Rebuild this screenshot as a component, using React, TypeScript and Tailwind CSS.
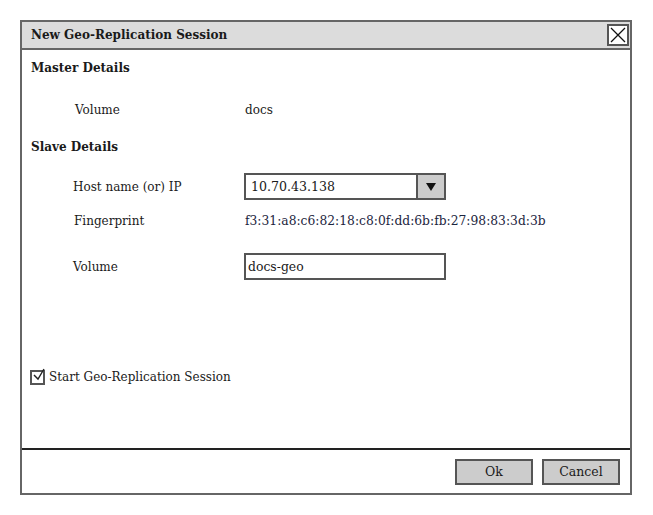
import React from 'react';

const serif = "font-['DejaVu_Serif',serif]";

export default function App() {
  return (
    <div className={`w-[653px] h-[515px] bg-white pt-5 pl-5 ${serif} text-[12px] leading-[18px] text-[#1a1a1a]`}>
      <div className="w-[612px] h-[475px] border-2 border-[#666] flex flex-col">
        {/* Title bar */}
        <div className="h-[28px] bg-[#dcdcdc] border-b-2 border-[#666] flex items-center justify-between pl-[9px] pr-[1px]">
          <span className="font-bold">New Geo-Replication Session</span>
          <div className="w-[22px] h-[22px] bg-white border-2 border-[#555] flex items-center justify-center">
            <svg width="16" height="16" viewBox="0 0 16 16">
              <path d="M1 1 L15 15 M15 1 L1 15" stroke="#111" strokeWidth="1.3" />
            </svg>
          </div>
        </div>

        {/* Body */}
        <div className="flex-1 flex flex-col px-[9px]">
          <div className="font-bold mt-[9px] h-[18px]">Master Details</div>
          <div className="flex items-center mt-[24px] h-[18px]">
            <span className="w-[214px] pl-[44px]">Volume</span>
            <span>docs</span>
          </div>

          <div className="font-bold mt-[19px] h-[18px]">Slave Details</div>
          <div className="flex items-center mt-[17px]">
            <span className="w-[213px] pl-[42px]">Host name (or) IP</span>
            <div className="w-[202px] h-[27px] border-2 border-[#555] flex">
              <span className="flex-1 pl-[5px] flex items-center text-[12.6px]">10.70.43.138</span>
              <div className="w-[28px] bg-[#cccccc] border-l-2 border-[#555] flex items-center justify-center">
                <svg width="10" height="8" viewBox="0 0 10 8">
                  <path d="M0 0 L10 0 L5 8 Z" fill="#111" />
                </svg>
              </div>
            </div>
          </div>
          <div className="flex items-center mt-[12px] h-[18px]">
            <span className="w-[214px] pl-[43px]">Fingerprint</span>
            <span className="text-[12.3px] text-[#1c2540]">f3:31:a8:c6:82:18:c8:0f:dd:6b:fb:27:98:83:3d:3b</span>
          </div>
          <div className="flex items-center mt-[23px]">
            <span className="w-[213px] pl-[42px]">Volume</span>
            <div className="w-[202px] h-[27px] border-2 border-[#555] flex items-center pl-[2px] text-[12.4px]">
              docs-geo
            </div>
          </div>

          <div className="flex items-center mt-[88px] -ml-[1px] gap-[4px] h-[18px]">
            <div className="w-[15px] h-[15px] border-2 border-[#555] relative">
              <svg className="absolute -top-[4px] left-[1px]" width="14" height="14" viewBox="0 0 14 14">
                <path d="M1 7 L5 11 L11 1" stroke="#222" strokeWidth="1.4" fill="none" />
              </svg>
            </div>
            <span>Start Geo-Replication Session</span>
          </div>
        </div>

        {/* Footer */}
        <div className="h-[45px] border-t-2 border-[#222] flex items-center justify-end gap-[9px] pr-[10px]">
          <button className="w-[78px] h-[26px] bg-[#cccccc] border-2 border-[#555] text-[12.5px]">Ok</button>
          <button className="w-[78px] h-[26px] bg-[#cccccc] border-2 border-[#555] text-[12.5px]">Cancel</button>
        </div>
      </div>
    </div>
  );
}
